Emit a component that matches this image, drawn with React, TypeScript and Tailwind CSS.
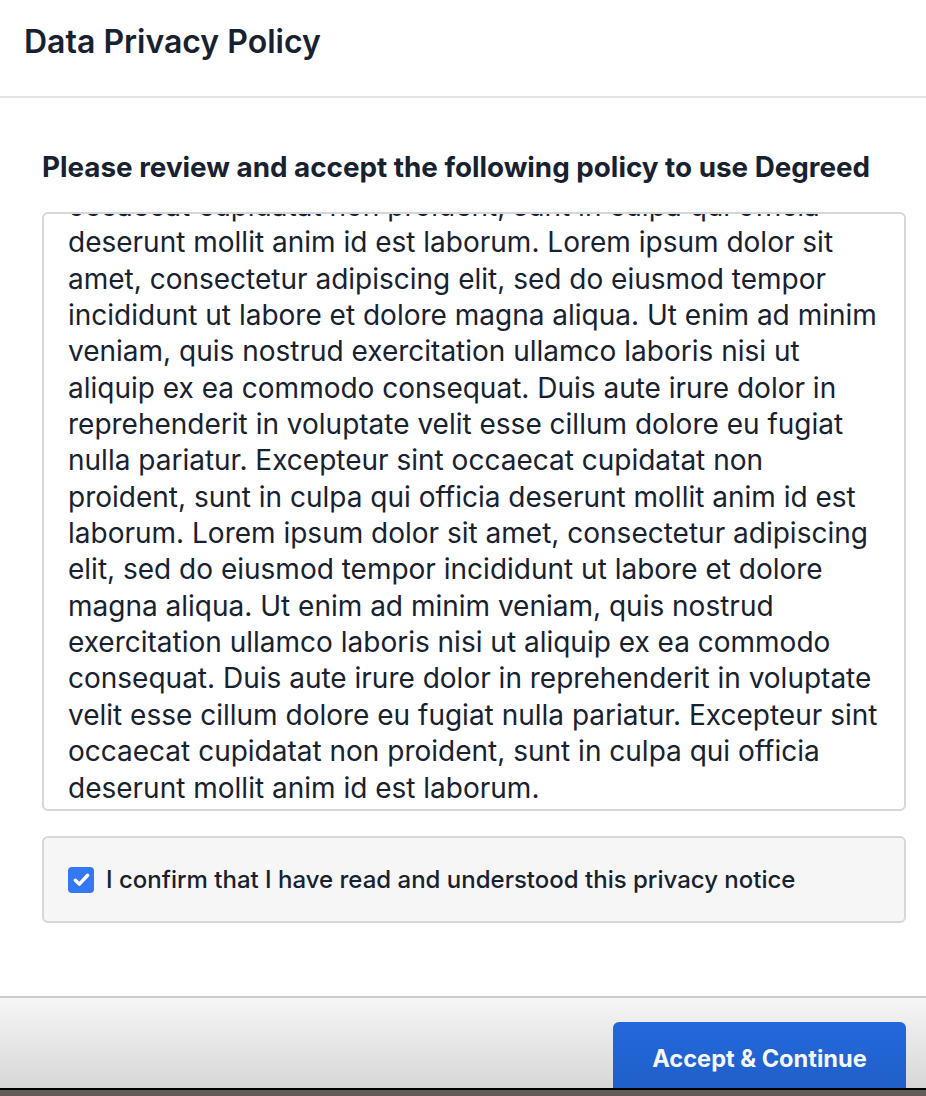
import React from 'react';

const policyLines = [
  'occaecat cupidatat non proident, sunt in culpa qui officia',
  'deserunt mollit anim id est laborum. Lorem ipsum dolor sit',
  'amet, consectetur adipiscing elit, sed do eiusmod tempor',
  'incididunt ut labore et dolore magna aliqua. Ut enim ad minim',
  'veniam, quis nostrud exercitation ullamco laboris nisi ut',
  'aliquip ex ea commodo consequat. Duis aute irure dolor in',
  'reprehenderit in voluptate velit esse cillum dolore eu fugiat',
  'nulla pariatur. Excepteur sint occaecat cupidatat non',
  'proident, sunt in culpa qui officia deserunt mollit anim id est',
  'laborum. Lorem ipsum dolor sit amet, consectetur adipiscing',
  'elit, sed do eiusmod tempor incididunt ut labore et dolore',
  'magna aliqua. Ut enim ad minim veniam, quis nostrud',
  'exercitation ullamco laboris nisi ut aliquip ex ea commodo',
  'consequat. Duis aute irure dolor in reprehenderit in voluptate',
  'velit esse cillum dolore eu fugiat nulla pariatur. Excepteur sint',
  'occaecat cupidatat non proident, sunt in culpa qui officia',
  'deserunt mollit anim id est laborum.',
];

export default function App() {
  return (
    <div className="flex h-[1096px] w-[926px] flex-col overflow-hidden bg-white font-['Inter',sans-serif] text-[#172130]">
      {/* header */}
      <div className="flex h-[98px] shrink-0 items-start border-b-2 border-[#e4e4e4] px-6 pt-[22px]">
        <h1 className="text-[32px] font-semibold leading-[40px]">Data Privacy Policy</h1>
      </div>

      {/* body */}
      <div className="flex flex-1 flex-col pl-[42px] pr-[20px] pt-[49px]">
        <h2 className="text-[27.8px] font-bold leading-[40px]">
          Please review and accept the following policy to use Degreed
        </h2>

        <div className="mt-[25px] h-[599px] shrink-0 overflow-hidden rounded-md border-2 border-[#d4d7dc] bg-white px-6">
          <div className="-mt-[26px] text-[28px] leading-[36.35px] text-[#172130]">
            {policyLines.map((line, i) => (
              <div key={i} className="whitespace-nowrap">
                {line}
              </div>
            ))}
          </div>
        </div>

        <label className="mt-[25px] flex h-[87px] shrink-0 items-center gap-3 rounded-md border-2 border-[#d4d7dc] bg-[#f6f6f7] px-6">
          <span className="flex h-[26px] w-[26px] items-center justify-center rounded-[4px] bg-[#3478f6]">
            <svg viewBox="0 0 16 16" className="h-[19px] w-[19px]" fill="none">
              <path d="M2.8 8.6l3.4 3.3L13.2 4.4" stroke="white" strokeWidth="2.9" strokeLinecap="round" strokeLinejoin="round" />
            </svg>
          </span>
          <span className="text-[24px] font-medium leading-[30px]">
            I confirm that I have read and understood this privacy notice
          </span>
        </label>
      </div>

      {/* footer */}
      <div className="h-[92px] shrink-0 overflow-hidden border-t-2 border-[#cacaca] bg-gradient-to-b from-[#f6f6f6] to-[#d7d7d7] pr-5 pt-6">
        <div className="flex justify-end">
          <button className="h-[90px] w-[293px] rounded-md bg-gradient-to-b from-[#2368db] to-[#1f5cc4] pb-[16px] text-[23.6px] font-bold text-[#f4f6fa]">
            Accept &amp; Continue
          </button>
        </div>
      </div>
      <div className="h-[2px] shrink-0 bg-black" />
      <div className="h-[6px] shrink-0 bg-[#625c56]" />
    </div>
  );
}
